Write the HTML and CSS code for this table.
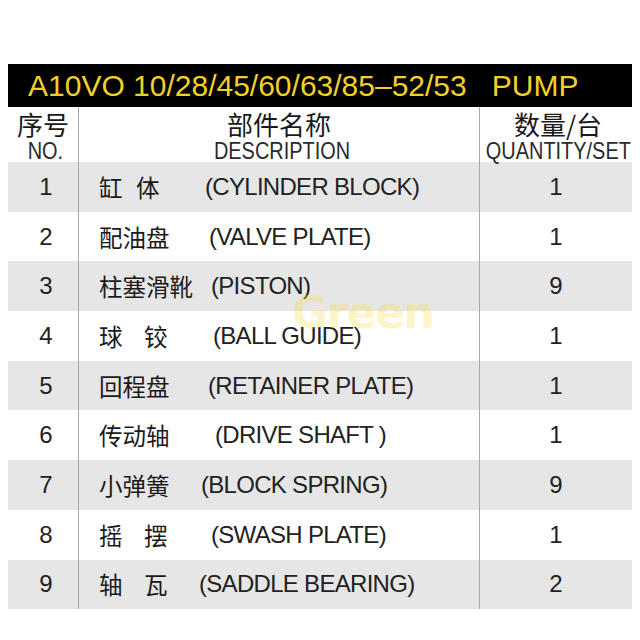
FILE: index.html
```html
<!DOCTYPE html>
<html lang="zh">
<head>
<meta charset="utf-8">
<title>A10VO Pump Parts</title>
<link rel="stylesheet" href="styles.css">
</head>
<body>
<div class="sheet">
  <div class="title"><span>A10VO 10/28/45/60/63/85–52/53</span><span class="pump">PUMP</span></div>
  <div class="table">
    <div class="cell head c1"><span class="hcn">序号</span><span class="hen">NO.</span></div>
    <div class="cell head c2"><span class="hcn">部件名称</span><span class="hen">DESCRIPTION</span></div>
    <div class="cell head c3"><span class="hcn">数量/台</span><span class="hen">QUANTITY/SET</span></div>

    <div class="cell num g">1</div>
    <div class="cell desc g"><span class="cn sp1">缸体</span><span class="en o6">(CYLINDER BLOCK)</span></div>
    <div class="cell qty g">1</div>

    <div class="cell num">2</div>
    <div class="cell desc"><span class="cn">配油盘</span><span class="en o10">(VALVE PLATE)</span></div>
    <div class="cell qty">1</div>

    <div class="cell num g">3</div>
    <div class="cell desc g"><span class="cn">柱塞滑靴</span><span class="en o12">(PISTON)</span></div>
    <div class="cell qty g">9</div>

    <div class="cell num">4</div>
    <div class="cell desc"><span class="cn sp2">球铰</span><span class="en o14">(BALL GUIDE)</span></div>
    <div class="cell qty">1</div>

    <div class="cell num g">5</div>
    <div class="cell desc g"><span class="cn">回程盘</span><span class="en o9">(RETAINER PLATE)</span></div>
    <div class="cell qty g">1</div>

    <div class="cell num">6</div>
    <div class="cell desc"><span class="cn">传动轴</span><span class="en o16">(DRIVE SHAFT )</span></div>
    <div class="cell qty">1</div>

    <div class="cell num g">7</div>
    <div class="cell desc g"><span class="cn">小弹簧</span><span class="en o2">(BLOCK SPRING)</span></div>
    <div class="cell qty g">9</div>

    <div class="cell num">8</div>
    <div class="cell desc"><span class="cn sp2">摇摆</span><span class="en o12">(SWASH PLATE)</span></div>
    <div class="cell qty">1</div>

    <div class="cell num g">9</div>
    <div class="cell desc g"><span class="cn sp2">轴瓦</span><span class="en o0">(SADDLE BEARING)</span></div>
    <div class="cell qty g">2</div>
  </div>
  <div class="watermark">Green</div>
</div>
</body>
</html>
```
FILE: styles.css
```css
html, body {
  margin: 0;
  padding: 0;
  background: #ffffff;
}
body {
  padding: 64px 8px 0 8px;
  font-family: "Liberation Sans", Arial, "Noto Sans CJK SC", sans-serif;
  color: #1e1e1e;
}
.sheet {
  position: relative;
  width: 624px;
}
.title {
  display: flex;
  align-items: center;
  height: 43px;
  background: #000000;
  color: #f2d02a;
  font-size: 30px;
  line-height: 43px;
  padding-left: 20px;
  white-space: nowrap;
}
.pump {
  margin-left: 25px;
}
.table {
  display: grid;
  grid-template-columns: 70px 401px 153px;
  grid-template-rows: 55px repeat(9, 49.7px);
}
.cell {
  display: flex;
  align-items: center;
  min-width: 0;
}
.c2, .c3, .desc, .qty {
  border-left: 1.5px solid #a8a8a8;
}
.head {
  flex-direction: column;
  align-items: center;
  justify-content: flex-start;
  padding-top: 3px;
}
.hcn {
  font-family: "Noto Sans CJK SC", sans-serif;
  font-size: 26px;
  line-height: 27px;
  color: #1a1a1a;
}
.hen {
  display: inline-block;
  font-size: 24px;
  line-height: 26px;
  margin-top: 1px;
  transform: scaleX(0.83);
  color: #2a2a2a;
  white-space: nowrap;
}
.c1 .hen { margin-left: 4px; }
.c2 .hen { margin-left: 6px; }
.c3 { padding-left: 4px; }
.g {
  background: #e6e6e6;
}
.num, .qty {
  justify-content: center;
  font-size: 24px;
  color: #222;
}
.num { padding-left: 6px; }
.desc {
  padding-left: 20px;
  white-space: nowrap;
}
.cn {
  display: inline-block;
  width: 100px;
  font-family: "Noto Sans CJK SC", sans-serif;
  font-size: 23.5px;
  color: #1a1a1a;
}
.sp1 { letter-spacing: 13.5px; }
.sp2 { letter-spacing: 21.5px; }
.en {
  font-size: 24px;
  letter-spacing: -0.7px;
  color: #222;
}
.o0 { margin-left: 0; }
.o2 { margin-left: 2px; }
.o6 { margin-left: 6px; }
.o9 { margin-left: 9px; }
.o10 { margin-left: 10px; }
.o12 { margin-left: 12px; }
.o14 { margin-left: 14px; }
.o16 { margin-left: 16px; }
.watermark {
  position: absolute;
  left: 284px;
  top: 223px;
  font-family: "DejaVu Sans", sans-serif;
  font-weight: bold;
  font-size: 44px;
  letter-spacing: -1.5px;
  color: rgba(248, 220, 60, 0.3);
  pointer-events: none;
}
```
